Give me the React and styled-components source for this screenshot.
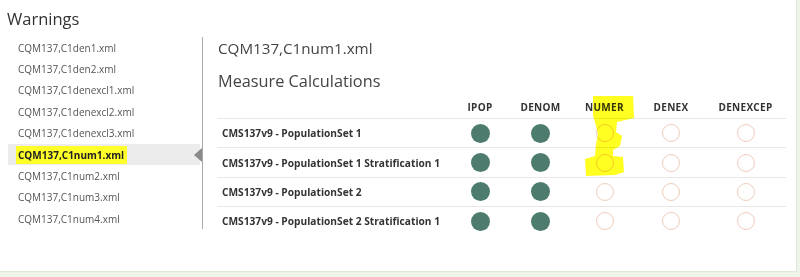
import React from 'react';
import styled, { createGlobalStyle } from 'styled-components';

const GlobalStyle = createGlobalStyle`
  html, body {
    margin: 0;
    padding: 0;
    background: #eef4ea;
    font-family: "Open Sans", "Liberation Sans", sans-serif;
  }
`;

const files = [
  'CQM137,C1den1.xml',
  'CQM137,C1den2.xml',
  'CQM137,C1denexcl1.xml',
  'CQM137,C1denexcl2.xml',
  'CQM137,C1denexcl3.xml',
  'CQM137,C1num1.xml',
  'CQM137,C1num2.xml',
  'CQM137,C1num3.xml',
  'CQM137,C1num4.xml',
];
const selectedFile = 'CQM137,C1num1.xml';

const columns = ['IPOP', 'DENOM', 'NUMER', 'DENEX', 'DENEXCEP'];

const rows = [
  { name: 'CMS137v9 - PopulationSet 1', values: [1, 1, 0, 0, 0] },
  { name: 'CMS137v9 - PopulationSet 1 Stratification 1', values: [1, 1, 0, 0, 0] },
  { name: 'CMS137v9 - PopulationSet 2', values: [1, 1, 0, 0, 0] },
  { name: 'CMS137v9 - PopulationSet 2 Stratification 1', values: [1, 1, 0, 0, 0] },
];

const Card = styled.div`
  width: 797px;
  height: 272px;
  box-sizing: border-box;
  background: #fff;
  border-right: 1px solid #dfe9da;
  border-bottom: 1px solid #dfe9da;
  display: flex;
  flex-direction: column;
`;

const PanelTitle = styled.h2`
  margin: 0;
  padding: 7px 0 0 7px;
  height: 30px;
  box-sizing: border-box;
  font-size: 16.5px;
  line-height: 24px;
  font-weight: 400;
  color: #333;
`;

const Body = styled.div`
  display: flex;
  padding-top: 7px;
`;

const Sidebar = styled.ul`
  list-style: none;
  margin: 0;
  padding: 0 0 0 8px;
  width: 203px;
  box-sizing: border-box;
  height: 192px;
  border-right: 1px solid #a8a8a8;
`;

const FileItem = styled.li`
  position: relative;
  height: 21.4px;
  margin-right: 2px;
  display: flex;
  align-items: center;
  padding-left: 10px;
  font-size: 10px;
  color: ${({ $active }) => ($active ? '#222' : '#555')};
  font-weight: ${({ $active }) => ($active ? 700 : 400)};
  background: ${({ $active }) => ($active ? '#ececec' : 'transparent')};
`;

const Marker = styled.span`
  background: #ffff2a;
  padding: 2px 3px 2px 2px;
  margin-left: -2px;
`;

const Pointer = styled.span`
  position: absolute;
  right: -2px;
  top: 50%;
  transform: translateY(-50%);
  width: 0;
  height: 0;
  border-top: 7px solid transparent;
  border-bottom: 7px solid transparent;
  border-right: 8px solid #8a8a8a;
`;

const Content = styled.div`
  flex: 1;
  padding-left: 14px;
`;

const FileTitle = styled.div`
  font-size: 15.2px;
  line-height: 20px;
  color: #444;
  margin-top: 1px;
  padding-left: 1px;
`;

const SectionTitle = styled.div`
  font-size: 16.3px;
  line-height: 22px;
  color: #444;
  margin-top: 12px;
  padding-left: 1px;
`;

const Table = styled.div`
  position: relative;
  width: 569px;
  margin-top: 4px;
  display: grid;
  grid-template-columns: 234px 58px 63px 65px 68px 1fr;
`;

const HeadCell = styled.div`
  height: 22px;
  display: flex;
  align-items: center;
  justify-content: center;
  font-size: 10px;
  font-weight: 700;
  letter-spacing: 0.3px;
  color: #333;
  border-bottom: 1px solid #e8e8e8;
`;

const RowName = styled.div`
  height: 28.4px;
  display: flex;
  align-items: center;
  padding-left: 5px;
  font-size: 10.2px;
  font-weight: 700;
  color: #333;
  white-space: nowrap;
  border-top: ${({ $first }) => ($first ? 'none' : '1px solid #e8e8e8')};
`;

const Cell = styled.div`
  height: 28.4px;
  display: flex;
  align-items: center;
  justify-content: center;
  border-top: ${({ $first }) => ($first ? 'none' : '1px solid #e8e8e8')};
`;

const Dot = styled.span`
  box-sizing: border-box;
  width: ${({ $on }) => ($on ? '19px' : '18px')};
  height: ${({ $on }) => ($on ? '19px' : '18px')};
  border-radius: 50%;
  background: ${({ $on }) => ($on ? '#4d7b6e' : 'transparent')};
  border: ${({ $on }) => ($on ? 'none' : '1.8px solid #efcdbd')};
`;

const Highlight = styled.svg`
  position: absolute;
  left: 0;
  top: 0;
  width: 569px;
  height: 140px;
  mix-blend-mode: multiply;
  pointer-events: none;
`;

export default function App() {
  return (
    <>
      <GlobalStyle />
      <Card>
        <PanelTitle>Warnings</PanelTitle>
        <Body>
          <Sidebar>
            {files.map((f) => {
              const active = f === selectedFile;
              return (
                <FileItem key={f} $active={active}>
                  {active ? <Marker>{f}</Marker> : f}
                  {active && <Pointer />}
                </FileItem>
              );
            })}
          </Sidebar>
          <Content>
            <FileTitle>{selectedFile}</FileTitle>
            <SectionTitle>Measure Calculations</SectionTitle>
            <Table>
              <HeadCell />
              {columns.map((c) => (
                <HeadCell key={c}>{c}</HeadCell>
              ))}
              {rows.map((r, i) => (
                <React.Fragment key={r.name}>
                  <RowName $first={i === 0}>{r.name}</RowName>
                  {r.values.map((v, j) => (
                    <Cell key={j} $first={i === 0}>
                      <Dot $on={!!v} />
                    </Cell>
                  ))}
                </React.Fragment>
              ))}
              <Highlight viewBox="0 0 569 140">
                <path
                  d="M376 -1 L416 -2 L417 22 L400 26 L399 36 L405 40 L403 50 L396 54 L396 60 L406 61 L407 76 L398 79 L369 80 L368 63 L378 60 L379 48 L381 38 L378 26 L376 20 Z"
                  fill="#ffff22"
                />
              </Highlight>
            </Table>
          </Content>
        </Body>
      </Card>
    </>
  );
}
